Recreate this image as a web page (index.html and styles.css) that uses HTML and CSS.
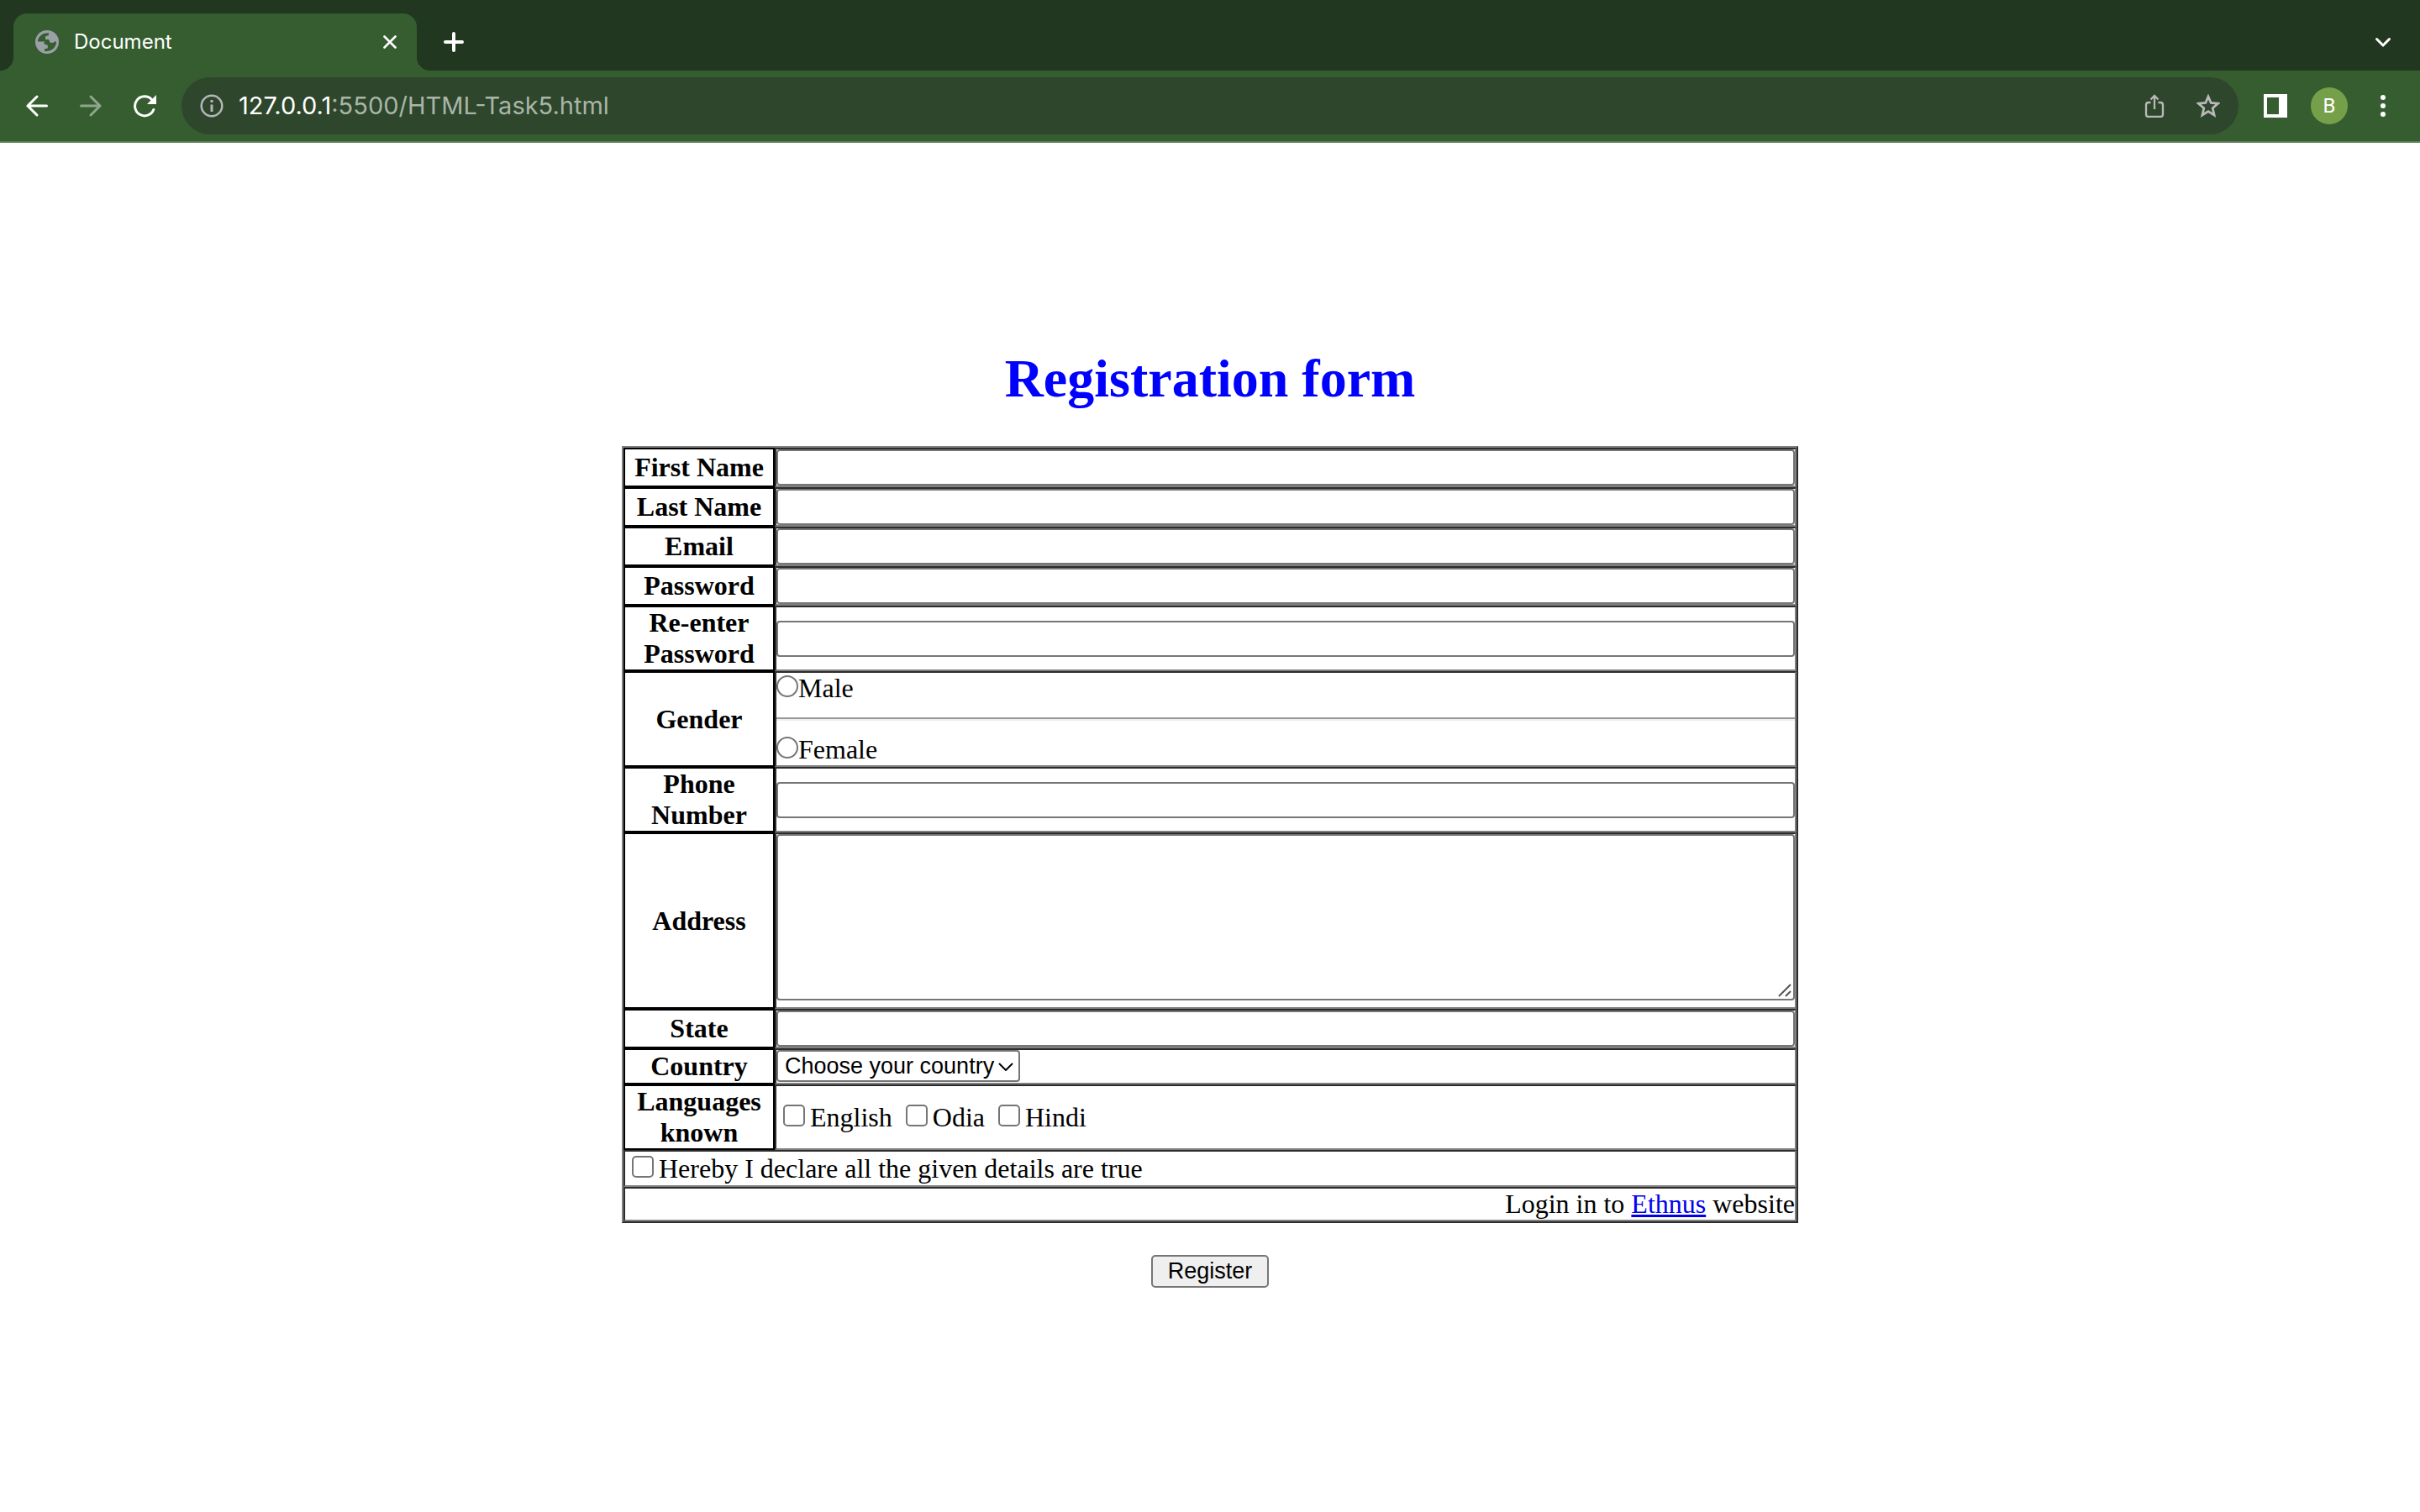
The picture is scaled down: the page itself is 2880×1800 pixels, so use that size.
FILE: index.html
```html
<!DOCTYPE html>
<html lang="en">
<head>
<meta charset="utf-8">
<title>Document</title>
<link rel="stylesheet" href="styles.css">
</head>
<body>
<header class="browser">
  <div class="tab-strip">
    <div class="tab">
      <svg class="icon-28" viewBox="0 0 28 28" aria-hidden="true"><circle cx="14" cy="14" r="14" fill="#9aa0a6"/><path d="M3 13.500C3 8 8 3 16 3.200V5q0 1.500-2 1.500-2 0-2 2v2.500h3q2 0 2 2t2 2q3 0 4-1.500h2C25 21 19 25.500 11 25v-3h2q2 0 2-2.500t-2.500-2.500-2-2.500-1.500-1z" fill="#355d30"/></svg>
      <span class="tab-title">Document</span>
      <button class="icon-button" aria-label="Close tab"><svg class="icon-16" viewBox="0 0 16 16"><path d="M1.500 1.500l13 13M14.500 1.500l-13 13" stroke="#fff" stroke-width="2.600" stroke-linecap="round" fill="none"/></svg></button>
    </div>
    <button class="icon-button" aria-label="New tab"><svg class="icon-24" viewBox="0 0 24 24"><path d="M12 2v20M2 12h20" stroke="#fff" stroke-width="4" stroke-linecap="round"/></svg></button>
    <button class="icon-button tab-search" aria-label="Search tabs"><svg class="icon-24" viewBox="0 0 24 24"><path d="M4.500 8.500l7.500 7.500 7.500-7.500" stroke="#fff" stroke-width="3" fill="none" stroke-linecap="round"/></svg></button>
  </div>
  <div class="toolbar">
    <nav class="nav-buttons" aria-label="Navigation">
      <button class="icon-button" aria-label="Back"><svg class="icon-28" viewBox="0 0 28 28"><path d="M25.500 14H3M14 3L3 14l11 11" stroke="#fff" stroke-width="3" stroke-linecap="round" fill="none"/></svg></button>
      <button class="icon-button" aria-label="Forward"><svg class="icon-28" viewBox="0 0 28 28"><path d="M2.500 14H25M14 3l11 11-11 11" stroke="#8fa58c" stroke-width="3" stroke-linecap="round" fill="none"/></svg></button>
      <button class="icon-button" aria-label="Reload"><svg class="icon-28" viewBox="0 0 28 28"><path d="M24.800 18.500A11.500 11.500 0 1 1 22.500 6.500" stroke="#fff" stroke-width="3" stroke-linecap="round" fill="none"/><path d="M28 1v11H17z" fill="#fff"/></svg></button>
    </nav>
    <div class="omnibox">
      <svg class="icon-28" viewBox="0 0 28 28" aria-hidden="true"><circle cx="14" cy="14" r="12.300" stroke="#b5b5bb" stroke-width="2.500" fill="none"/><path d="M14 12.500v8.500M14 7v3" stroke="#b5b5bb" stroke-width="3"/></svg>
      <div class="url"><span class="host">127.0.0.1</span>:5500/HTML-Task5.html</div>
      <button class="icon-button" aria-label="Share"><svg class="icon-28" viewBox="0 0 28 28"><path d="M9.500 10H7q-3 0-3 3v11q0 3 3 3h14q3 0 3-3V13q0-3-3-3h-2.500M14 18V2M9.500 6.500L14 2l4.500 4.500" stroke="#b9b9b9" stroke-width="2.300" fill="none"/></svg></button>
      <button class="icon-button" aria-label="Bookmark"><svg class="icon-28" viewBox="0 0 28 28"><path d="M14 3l3.200 7.500 8.300.700-6.300 5.500 1.900 8.300-7.100-4.400L6.900 25l1.900-8.300L2.500 11.200l8.300-.700z" stroke="#b9b9b9" stroke-width="2.800" fill="none"/></svg></button>
    </div>
    <div class="actions">
      <button class="icon-button" aria-label="Side panel"><svg class="icon-28" viewBox="0 0 28 28"><path fill-rule="evenodd" d="M0 0h28v28H0zM4 4v20h14V4z" fill="#fff"/></svg></button>
      <button class="avatar">B</button>
      <button class="icon-button" aria-label="Menu"><svg class="icon-28" viewBox="0 0 28 28"><g fill="#fff"><circle cx="14" cy="4" r="3"/><circle cx="14" cy="14" r="3"/><circle cx="14" cy="24" r="3"/></g></svg></button>
    </div>
  </div>
</header>
<main class="page">
  <form>
    <h1>Registration form</h1>
    <table class="form-table">
      <tr><th><label for="first">First Name</label></th><td><input class="field" type="text" id="first"></td></tr>
      <tr><th><label for="last">Last Name</label></th><td><input class="field" type="text" id="last"></td></tr>
      <tr><th><label for="email">Email</label></th><td><input class="field" type="email" id="email"></td></tr>
      <tr><th><label for="pass">Password</label></th><td><input class="field" type="password" id="pass"></td></tr>
      <tr><th><label for="pass2">Re-enter Password</label></th><td><input class="field" type="password" id="pass2"></td></tr>
      <tr><th>Gender</th><td><input class="radio" type="radio" name="gender" id="male"><label for="male">Male</label><hr><input class="radio" type="radio" name="gender" id="female"><label for="female">Female</label></td></tr>
      <tr><th><label for="phone">Phone Number</label></th><td><input class="field" type="tel" id="phone"></td></tr>
      <tr><th><label for="address">Address</label></th><td><div class="area-wrap"><textarea class="field area" id="address"></textarea><svg class="grip" viewBox="0 0 16 16" aria-hidden="true"><path d="M1 15L15 1M9 15l6-6" stroke="#555" stroke-width="2" fill="none"/></svg></div></td></tr>
      <tr><th><label for="state">State</label></th><td><input class="field" type="text" id="state"></td></tr>
      <tr><th><label for="country">Country</label></th><td><div class="select-wrap"><select id="country"><option>Choose your country</option></select><svg class="select-arrow" viewBox="0 0 18 10" aria-hidden="true"><path d="M1 1l8 8 8-8" stroke="#000" stroke-width="2" fill="none"/></svg></div></td></tr>
      <tr><th>Languages known</th><td class="choices"><input class="check" type="checkbox" id="en"><label for="en">English</label> <input class="check" type="checkbox" id="od"><label for="od">Odia</label> <input class="check" type="checkbox" id="hi"><label for="hi">Hindi</label></td></tr>
      <tr><td class="choices" colspan="2"><input class="check" type="checkbox" id="declare"><label for="declare">Hereby I declare all the given details are true</label></td></tr>
      <tr><td class="login" colspan="2">Login in to <a href="#">Ethnus</a> website</td></tr>
    </table>
    <button class="register" type="button">Register</button>
  </form>
</main>
</body>
</html>
```
FILE: styles.css
```css
* { box-sizing: border-box; }
body { margin: 0; background: #fff; color: #000; font: 32px/37px "Liberation Serif", "Times New Roman", serif; }
svg { display: block; }

/* Browser frame */
.browser { background: #355d30; border-bottom: 2px solid #5d7e59; font-family: Inter, sans-serif; color: #fff; }
.tab-strip { display: flex; align-items: center; height: 84px; padding: 16px 32px 0 16px; background: #21371f; }
.tab {
  position: relative; display: flex; align-items: center; gap: 18px;
  width: 480px; height: 68px; padding: 0 24px 0 26px; margin-right: 32px;
  border-radius: 16px 16px 0 0; background: #355d30; font-size: 24px; line-height: 32px;
}
.tab::before, .tab::after { content: ""; position: absolute; bottom: 0; width: 16px; height: 16px; }
.tab::before { right: 100%; background: radial-gradient(circle at 0 0, transparent 16px, #355d30 16px); }
.tab::after { left: 100%; background: radial-gradient(circle at 100% 0, transparent 16px, #355d30 16px); }
.tab-title { flex: 1; }
.tab-search { margin-left: auto; }
.icon-button { flex: none; padding: 0; border: 0; background: none; }
.icon-16 { width: 16px; height: 16px; }
.icon-24 { width: 24px; height: 24px; }
.icon-28 { flex: none; width: 28px; height: 28px; }
.toolbar { display: flex; align-items: center; gap: 30px; height: 84px; padding: 0 30px; }
.nav-buttons { display: flex; gap: 36px; }
.omnibox { display: flex; flex: 1; align-items: center; gap: 36px; height: 68px; padding: 0 22px; border-radius: 34px; background: #2e462b; }
.url { flex: 1; margin-left: -18px; font-size: 29px; line-height: 36px; color: #a9b5a8; }
.host { color: #fff; }
.actions { display: flex; align-items: center; gap: 28px; }
.avatar { width: 44px; height: 44px; padding: 0; border: 0; border-radius: 50%; background: #75a049; color: #fff; font: 24px/44px Roboto, sans-serif; }

/* Registration form */
.page { padding: 244px 16px 80px; }
h1 { margin: 0 0 43px; font-size: 64px; line-height: 74px; color: #00f; text-align: center; }
.form-table { width: 100%; max-width: 1400px; margin: 0 auto; border: 2px outset gray; border-spacing: 0; }
.form-table th { width: 180px; padding: 0; border: 2px solid #000; }
.form-table td { padding: 0; border: 2px inset gray; }
.form-table .choices { padding: 2px 0 1px; }
.field { display: block; width: 100%; height: 43px; padding: 2px 4px; border: 2px solid #767676; border-radius: 4px; background: #fff; font: 27px/31px "Liberation Sans", Arial, sans-serif; }
.area-wrap { position: relative; padding-bottom: 8px; }
.area { height: 198px; resize: none; }
.grip { position: absolute; right: 4px; bottom: 12px; width: 16px; height: 16px; pointer-events: none; }
hr { margin: 16px 0; border: 0; border-top: 2px solid #9a9a9a; border-bottom: 2px solid #eee; }
.radio, .check { appearance: none; width: 26px; height: 26px; border: 2px solid #767676; background: #fff; vertical-align: baseline; }
.radio { margin: 0; border-radius: 50%; }
.check { margin: 0 6px 0 8px; border-radius: 5px; }
.login { text-align: right; }
a { color: #00e; }
.select-wrap { position: relative; width: max-content; padding-bottom: 1px; }
select { display: block; appearance: none; width: 290px; height: 38px; padding: 0 8px; border: 2px solid #767676; border-radius: 4px; background: #fff; color: #000; font: 27px/34px "Liberation Sans", Arial, sans-serif; }
.select-arrow { position: absolute; right: 8px; top: 15px; width: 18px; height: 10px; pointer-events: none; }
.register { display: block; height: 39px; margin: 38px auto 0; padding: 0 18px; border: 2px solid #767676; border-radius: 5px; background: #efefef; color: #000; font: 27px/35px "Liberation Sans", Arial, sans-serif; }
```
